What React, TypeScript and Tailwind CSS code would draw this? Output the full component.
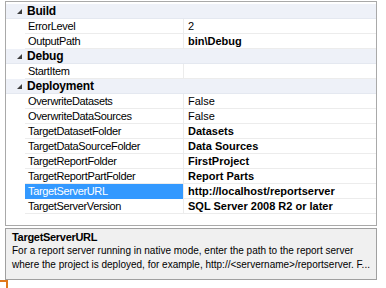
import React from "react";

type Row =
  | { kind: "cat"; label: string }
  | { kind: "prop"; name: string; value: string; bold?: boolean; selected?: boolean };

const rows: Row[] = [
  { kind: "cat", label: "Build" },
  { kind: "prop", name: "ErrorLevel", value: "2" },
  { kind: "prop", name: "OutputPath", value: "bin\\Debug", bold: true },
  { kind: "cat", label: "Debug" },
  { kind: "prop", name: "StartItem", value: "" },
  { kind: "cat", label: "Deployment" },
  { kind: "prop", name: "OverwriteDatasets", value: "False" },
  { kind: "prop", name: "OverwriteDataSources", value: "False" },
  { kind: "prop", name: "TargetDatasetFolder", value: "Datasets", bold: true },
  { kind: "prop", name: "TargetDataSourceFolder", value: "Data Sources", bold: true },
  { kind: "prop", name: "TargetReportFolder", value: "FirstProject", bold: true },
  { kind: "prop", name: "TargetReportPartFolder", value: "Report Parts", bold: true },
  { kind: "prop", name: "TargetServerURL", value: "http://localhost/reportserver", bold: true, selected: true },
  { kind: "prop", name: "TargetServerVersion", value: "SQL Server 2008 R2 or later", bold: true },
];

function Tri() {
  return (
    <svg width="5" height="5" viewBox="0 0 5 5">
      <polygon points="5,0 5,5 0,5" fill="#3c3c3c" />
    </svg>
  );
}

export default function App() {
  return (
    <div
      className="w-[386px] h-[288px] bg-white relative overflow-hidden text-[11px] text-black"
      style={{ fontFamily: '"Liberation Sans", Arial, sans-serif' }}
    >
      <div className="pt-[1px] pl-[5px]">
        <div className="w-[372px] h-[225px] border border-[#a9a9a9] bg-white flex flex-col">
          <div className="h-[2px]" />
          {rows.map((r, i) =>
            r.kind === "cat" ? (
              <div key={i} className="h-[15px] flex items-center bg-[#eef1f8] border-b border-[#e4e8f0]">
                <div className="w-[19px] flex justify-end pr-[3px]">
                  <Tri />
                </div>
                <div className="pl-[2px] font-bold text-[12px] leading-none tracking-[-0.2px]">{r.label}</div>
              </div>
            ) : (
              <div key={i} className="h-[15px] flex">
                <div className="w-[19px] shrink-0" />
                <div
                  className={
                    r.selected
                      ? "w-[158px] shrink-0 bg-[#3399ff] text-white flex items-center pl-[3px] border-b border-[#3399ff] tracking-[-0.35px]"
                      : "w-[158px] shrink-0 flex items-center pl-[3px] border-b border-[#ececec] tracking-[-0.35px]"
                  }
                >
                  {r.name}
                </div>
                <div
                  className={
                    "flex-1 flex items-center pl-[4px] border-b border-l border-[#ececec] " +
                    (r.bold ? "font-bold" : "")
                  }
                >
                  {r.value}
                </div>
              </div>
            )
          )}
        </div>
        <div className="mt-[2px] w-[372px] h-[52px] border border-[#a0a0a0] bg-[#f0f0f0] px-[6px] pt-[1px] leading-[14px]">
          <div className="font-bold tracking-[-0.3px]">TargetServerURL</div>
          <div className="text-[10px]">
            For a report server running in native mode, enter the path to the report server
          </div>
          <div className="text-[10px]">
            where the project is deployed, for example, http://&lt;servername&gt;/reportserver. F...
          </div>
        </div>
      </div>
      <div className="absolute left-0 top-[280px] w-[8px] h-[8px] border-t-2 border-r-2 border-[#e0771a]" />
    </div>
  );
}
